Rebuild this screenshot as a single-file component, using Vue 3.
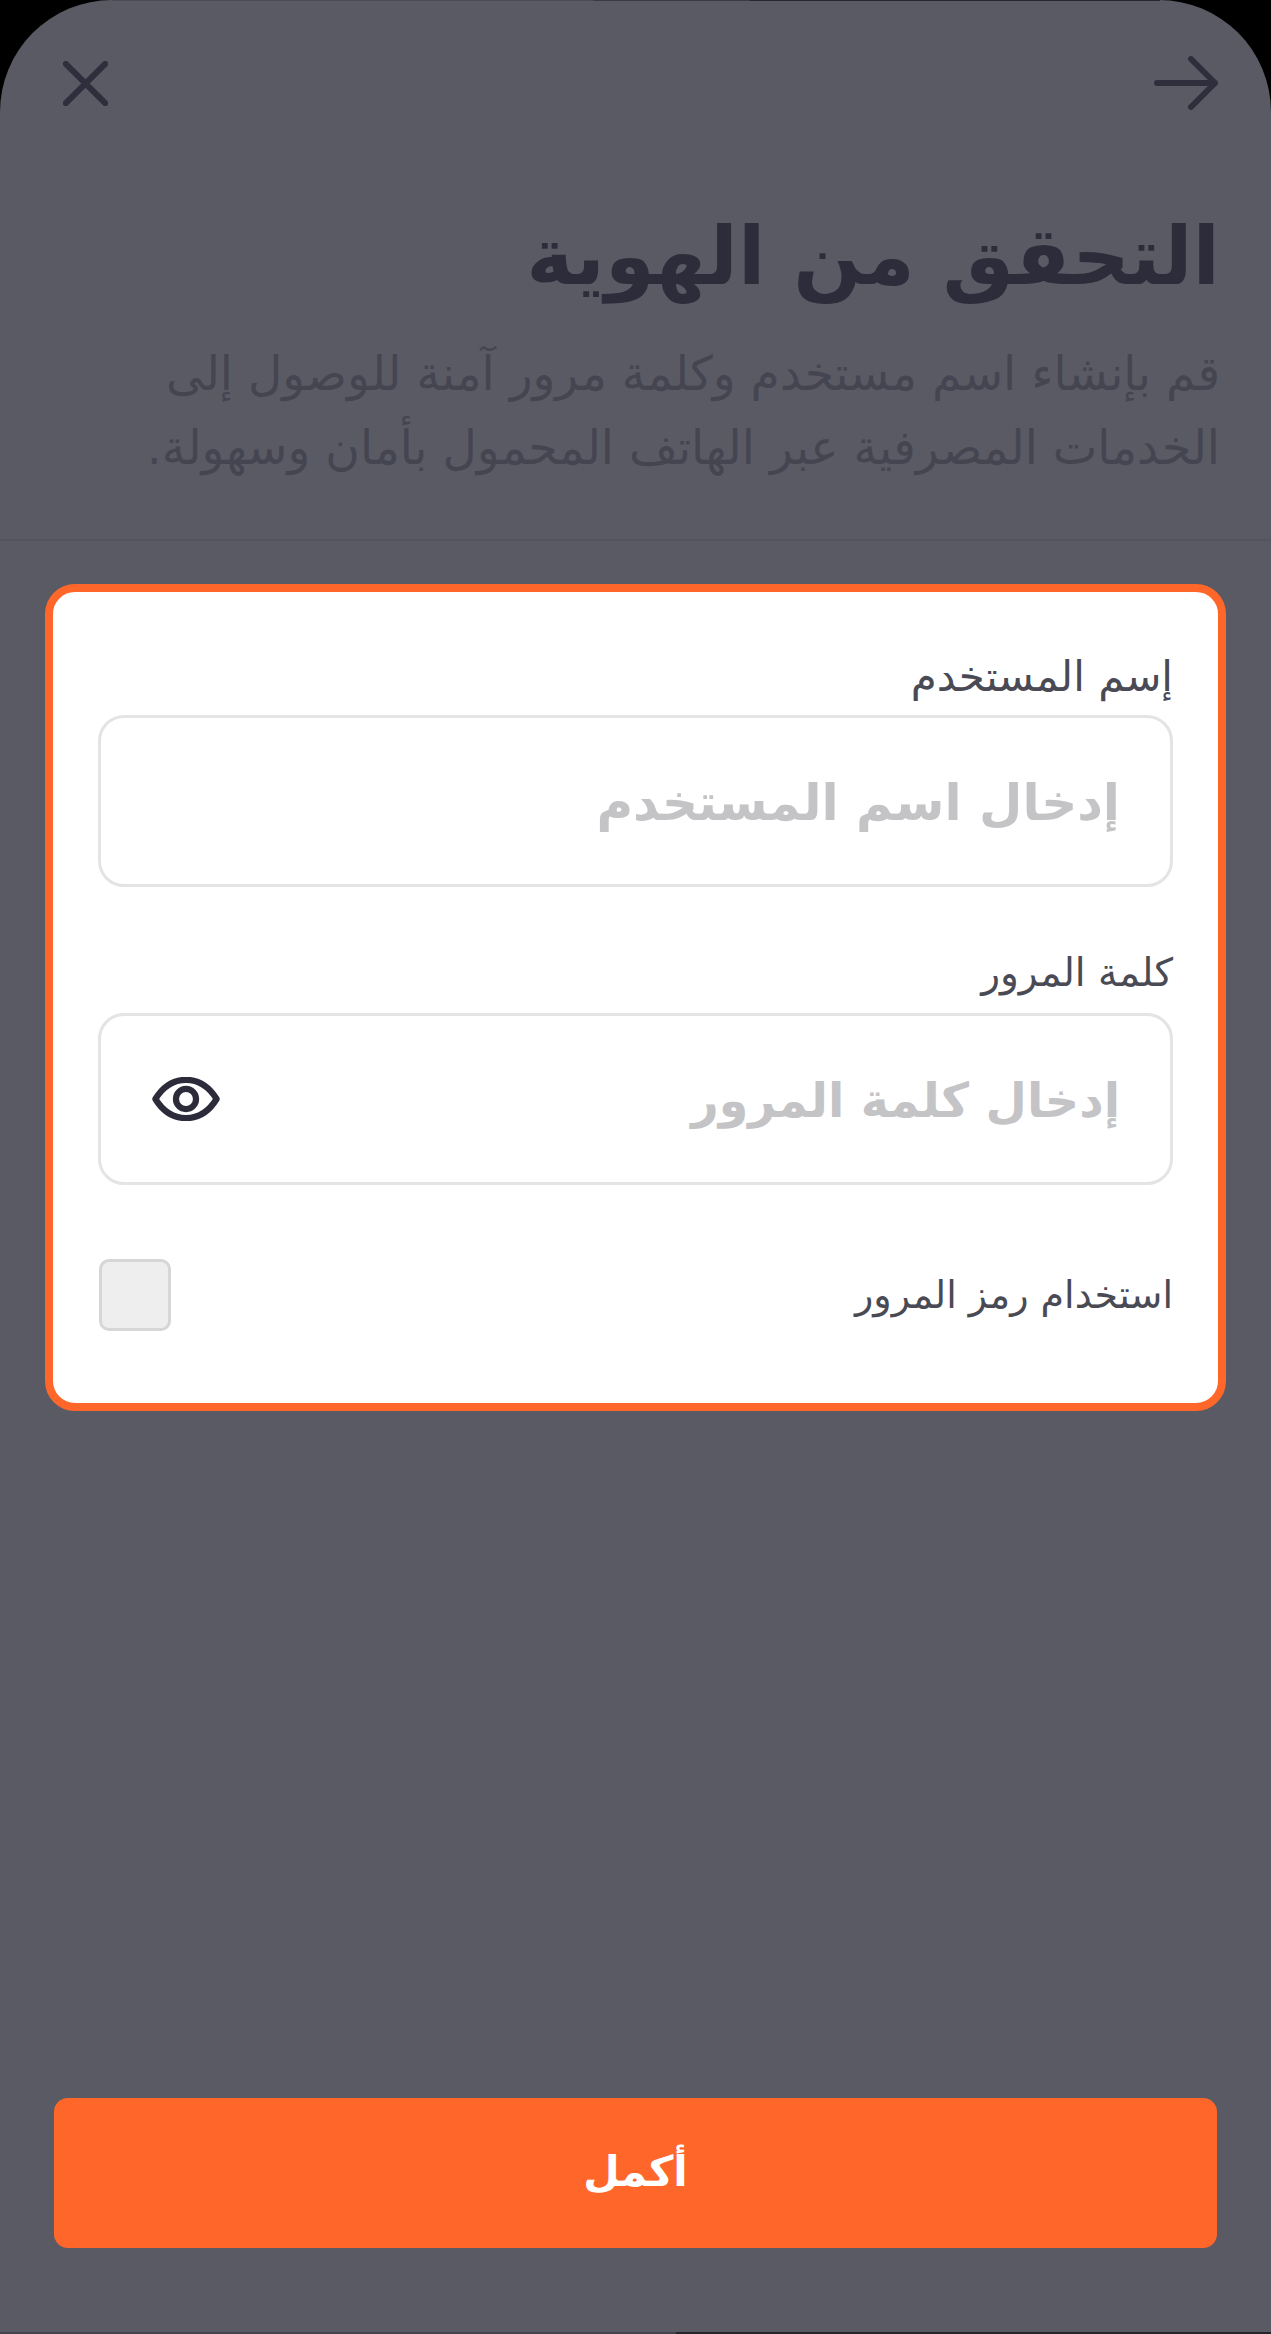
<script setup>
const fields = [
  { label: 'إسم المستخدم', placeholder: 'إدخال اسم المستخدم', eye: false, labelClass: 'label-a', textClass: 'text-a' },
  { label: 'كلمة المرور', placeholder: 'إدخال كلمة المرور', eye: true, labelClass: 'label-b', textClass: 'text-b' },
]
</script>

<template>
  <div class="backdrop">
    <main class="screen" dir="rtl">
      <header class="topbar">
        <button class="icon-btn" aria-label="back">
          <svg width="66" height="54" viewBox="0 0 66 54" fill="none" stroke="#2f2e3d" stroke-width="6" stroke-linecap="round" stroke-linejoin="round">
            <path d="M4 27H62M38 3L62 27L38 51" />
          </svg>
        </button>
        <button class="icon-btn" aria-label="close">
          <svg width="45" height="45" viewBox="0 0 48 48" fill="none" stroke="#2f2e3d" stroke-width="6.4" stroke-linecap="round">
            <path d="M3 3L45 45M45 3L3 45" />
          </svg>
        </button>
      </header>

      <section class="intro">
        <h1 class="title">التحقق من الهوية</h1>
        <p class="desc">قم بإنشاء اسم مستخدم وكلمة مرور آمنة للوصول إلى الخدمات المصرفية عبر الهاتف المحمول بأمان وسهولة.</p>
      </section>

      <section class="card">
        <div v-for="f in fields" :key="f.label" class="field">
          <div class="label" :class="f.labelClass">{{ f.label }}</div>
          <div class="input">
            <span class="placeholder" :class="f.textClass">{{ f.placeholder }}</span>
            <svg v-if="f.eye" class="eye" width="68" height="44" viewBox="0 0 70 46" fill="none" stroke="#2c2b3a" stroke-width="6.5">
              <path d="M3 23C11 10 22 3 35 3C48 3 59 10 67 23C59 36 48 43 35 43C22 43 11 36 3 23Z" stroke-linejoin="round" />
              <circle cx="35" cy="23" r="10.5" />
            </svg>
          </div>
        </div>
        <div class="check-row">
          <span class="label">استخدام رمز المرور</span>
          <span class="checkbox"></span>
        </div>
      </section>

      <button class="submit">أكمل</button>
    </main>
  </div>
</template>

<style scoped>
.backdrop { width: 1271px; height: 2334px; background: #000; overflow: hidden; }
.screen {
  width: 1271px; height: 2334px; box-sizing: border-box;
  background:
    linear-gradient(90deg, transparent 112px, #4c4c56 112px, #4c4c56 593px, #3a3a45 593px, #3a3a45 750px, #26262e 750px, #26262e 1160px, transparent 1160px) top / 100% 1px no-repeat,
    linear-gradient(90deg, #44444c 676px, #25252b 676px) bottom / 100% 2px no-repeat,
    #5a5a64;
  border-radius: 112px 112px 0 0; display: flex; flex-direction: column;
  font-family: "DejaVu Sans", "Noto Sans", sans-serif;
}
.topbar { display: flex; justify-content: space-between; align-items: center; padding: 55px 52px 0 63px; height: 56px; }
.icon-btn { background: none; border: 0; padding: 0; display: flex; }
.intro { padding: 96px 51px 0; height: 332px; border-bottom: 2px solid #545460; }
.title { margin: 0; font-size: 80px; line-height: 100px; font-weight: 700; color: #2d2c3b; }
.desc { margin: 30px 0 0; font-size: 47.3px; line-height: 74px; color: #454552; }
.card {
  margin: 43px 45px 0 45px; height: 827px; box-sizing: border-box; background: #fff; border: 8px solid #ff672a;
  border-radius: 30px; padding: 56px 45px 0; display: flex; flex-direction: column;
}
.field { margin-bottom: 59px; }
.label { font-size: 38px; line-height: 60px; color: #4a4a55; }
.label-a { font-size: 42px; line-height: 58px; margin-bottom: 9px; }
.label-b { font-size: 39px; line-height: 54px; margin-bottom: 13px; }
.input {
  height: 172px; box-sizing: border-box; border: 3px solid #e4e4e6; border-radius: 26px;
  display: flex; align-items: center; justify-content: space-between; padding: 0 50px;
}
.placeholder { font-weight: 700; color: #c4c4c7; padding-top: 3px; }
.text-a { font-size: 50px; }
.text-b { font-size: 47.7px; }
.eye { margin-inline-end: 1px; }
.check-row { display: flex; align-items: center; justify-content: space-between; margin-top: 15px; padding-inline-end: 1px; }
.checkbox { width: 72px; height: 72px; box-sizing: border-box; background: #eee; border: 3px solid #d6d6d6; border-radius: 10px; }
.submit {
  margin: auto 54px 86px 54px; height: 150px; background: #ff672a; border: 0; border-radius: 14px;
  font-family: inherit; font-size: 42px; font-weight: 700; color: #fff; padding: 0 0 4px;
}
</style>
